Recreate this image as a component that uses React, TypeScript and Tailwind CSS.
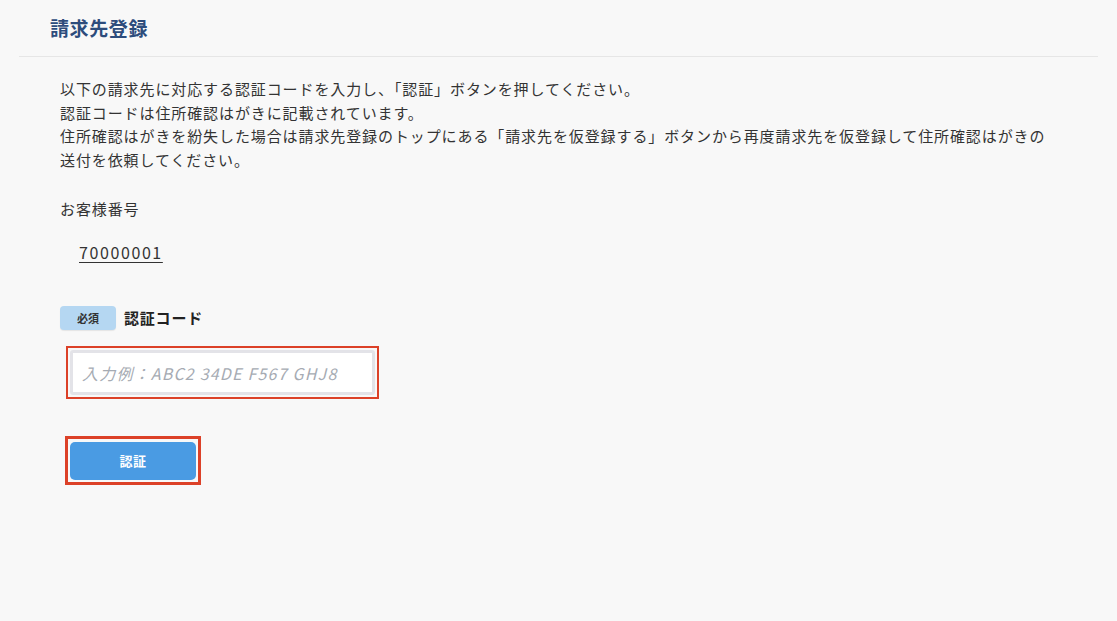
export default function App() {
    return (
        <div
            className="min-h-screen w-full bg-[#f8f8f8] text-[#222]"
            style={{ fontFamily: '"Noto Sans CJK JP", "Noto Sans", sans-serif' }}
        >
            <div className="mx-[19px]">
                <div className="h-[57px] border-b border-[#e6e6e6] pl-[31px] flex items-center pb-[2px]">
                    <h1 className="text-[19px] font-bold text-[#2d4c7c] leading-none tracking-[0.6px]">請求先登録</h1>
                </div>

                <div className="pl-[41px] pt-[20px]">
                    <p className="text-[15px] leading-[23.5px] text-[#333] tracking-[0.9px]">
                        以下の請求先に対応する認証コードを入力し、「認証」ボタンを押してください。<br />
                        認証コードは住所確認はがきに記載されています。<br />
                        住所確認はがきを紛失した場合は請求先登録のトップにある「請求先を仮登録する」ボタンから再度請求先を仮登録して住所確認はがきの<br />
                        送付を依頼してください。
                    </p>

                    <p className="mt-[28px] text-[15px] text-[#333] leading-[20px] tracking-[0.9px]">お客様番号</p>
                    <p className="mt-[23px] ml-[19px] text-[16px] text-[#333] leading-[20px] tracking-[1.6px]">
                        <span className="underline underline-offset-[3px]">70000001</span>
                    </p>

                    <div className="mt-[44px] flex items-center gap-[8px]">
                        <span className="w-[56px] h-[24px] rounded-[4px] bg-[#b5d7f2] text-[11px] font-bold text-[#333] flex items-center justify-center shadow-[0_1px_1px_rgba(0,0,0,0.08)]">
                            必須
                        </span>
                        <span className="text-[15px] font-bold text-[#222] tracking-[0.8px]">認証コード</span>
                    </div>

                    <div className="mt-[16px] ml-[6px] w-[313px] h-[53px] border-2 border-[#dc4128] p-[2px]">
                        <input
                            className="w-full h-full rounded-[3px] border-[3px] border-[#e3e3e8] bg-white px-[9px] text-[16px] italic tracking-[1.2px] outline-none placeholder:text-[#a6abb3]"
                            style={{ fontFamily: '"Noto Sans CJK JP", "Noto Sans", sans-serif' }}
                            placeholder="入力例：ABC2 34DE F567 GHJ8"
                        />
                    </div>

                    <div className="mt-[37px] ml-[5px] w-[136px] h-[49px] border-[3px] border-[#dc4128] p-[2px] pt-[3px]">
                        <button className="w-full h-full rounded-[5px] bg-[#4a9be3] text-white text-[13px] font-bold tracking-[0.5px]">
                            認証
                        </button>
                    </div>
                </div>
            </div>
        </div>
    )
}
